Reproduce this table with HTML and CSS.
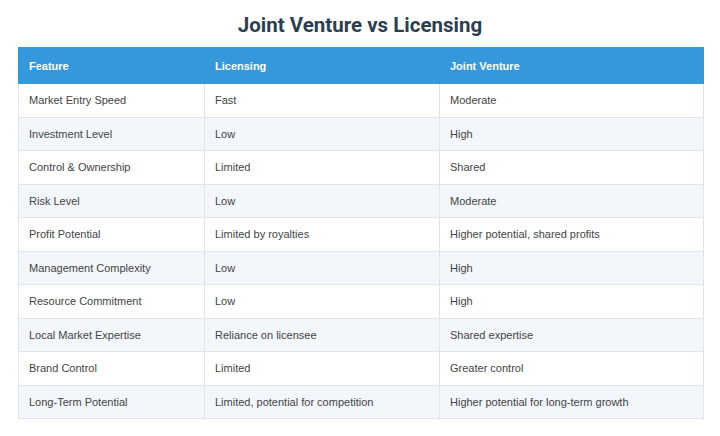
FILE: index.html
```html
<!DOCTYPE html>
<html>
<head>
<meta charset="utf-8">
<link rel="stylesheet" href="styles.css">
</head>
<body>
<h1 class="title">Joint Venture vs Licensing</h1>
<table class="cmp">
  <colgroup>
    <col class="c1"><col class="c2"><col class="c3">
  </colgroup>
  <thead>
    <tr><th>Feature</th><th>Licensing</th><th>Joint Venture</th></tr>
  </thead>
  <tbody>
    <tr><td>Market Entry Speed</td><td>Fast</td><td>Moderate</td></tr>
    <tr><td>Investment Level</td><td>Low</td><td>High</td></tr>
    <tr><td>Control &amp; Ownership</td><td>Limited</td><td>Shared</td></tr>
    <tr><td>Risk Level</td><td>Low</td><td>Moderate</td></tr>
    <tr><td>Profit Potential</td><td>Limited by royalties</td><td>Higher potential, shared profits</td></tr>
    <tr><td>Management Complexity</td><td>Low</td><td>High</td></tr>
    <tr><td>Resource Commitment</td><td>Low</td><td>High</td></tr>
    <tr><td>Local Market Expertise</td><td>Reliance on licensee</td><td>Shared expertise</td></tr>
    <tr><td>Brand Control</td><td>Limited</td><td>Greater control</td></tr>
    <tr><td>Long-Term Potential</td><td>Limited, potential for competition</td><td>Higher potential for long-term growth</td></tr>
  </tbody>
</table>
</body>
</html>
```

FILE: styles.css
```css
html, body {
  margin: 0;
  padding: 0;
  background: #ffffff;
}
body {
  width: 720px;
  height: 436px;
  overflow: hidden;
}
.title {
  margin: 0;
  height: 46px;
  display: flex;
  align-items: center;
  justify-content: center;
  padding-top: 3px;
  box-sizing: border-box;
  font-family: Roboto, "Liberation Sans", sans-serif;
  font-weight: 700;
  font-size: 20.5px;
  color: #2c3e50;
}
.cmp {
  margin: 1px 18px 0 18px;
  width: 685px;
  border-collapse: collapse;
  table-layout: fixed;
  font-family: "Liberation Sans", Arial, sans-serif;
  font-size: 11px;
}
.c1 { width: 186px; }
.c2 { width: 235px; }
.c3 { width: 264px; }
.cmp th {
  background: #3498db;
  color: #ffffff;
  font-weight: 700;
  text-align: left;
  height: 35px;
  padding: 0 10px;
  border: 1px solid #3498db;
}
.cmp td {
  height: 33.5px;
  padding: 0 10px;
  color: #444444;
  border: 1px solid #e1e5ea;
  box-sizing: border-box;
}
.cmp tbody tr:nth-child(even) td {
  background: #f3f6fa;
}
```
